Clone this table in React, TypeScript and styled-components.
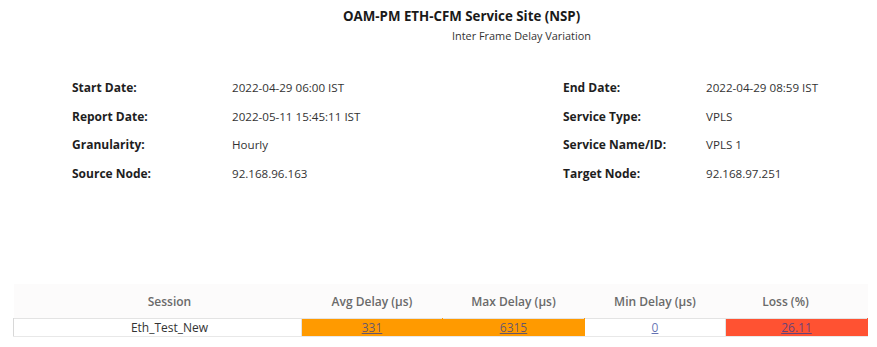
import React from "react";
import styled, { createGlobalStyle } from "styled-components";

const GlobalStyle = createGlobalStyle`
  html, body {
    margin: 0;
    padding: 0;
    background: #ffffff;
  }
  body {
    font-family: "Open Sans", "Noto Sans", "Liberation Sans", sans-serif;
    color: #222;
  }
`;

const Page = styled.div`
  width: 877px;
  height: 347px;
  box-sizing: border-box;
  display: flex;
  flex-direction: column;
  overflow: hidden;
`;

const Header = styled.header`
  display: flex;
  flex-direction: column;
  align-items: flex-start;
  padding: 6px 0 0 343px;
`;

const Title = styled.h1`
  margin: 0;
  font-size: 13.3px;
  font-weight: 700;
  line-height: 20px;
  color: #1a1a1a;
`;

const Subtitle = styled.div`
  margin: 2px 0 0 109px;
  font-size: 10.9px;
  line-height: 16px;
  color: #333;
`;

const InfoGrid = styled.dl`
  margin: 0;
  padding: 29px 0 0 72px;
  display: grid;
  grid-template-columns: 160px 331px 143px auto;
  grid-auto-rows: 28.7px;
  align-items: center;
  font-size: 12px;
`;

const Label = styled.dt`
  font-weight: 700;
  color: #1e1e1e;
`;

const Value = styled.dd`
  margin: 0;
  font-size: 11.6px;
  color: #333;
`;

const Table = styled.table`
  margin: 96px 0 0 13px;
  width: 854px;
  border-collapse: collapse;
  table-layout: fixed;
  font-size: 12px;
`;

const HeadRow = styled.tr`
  background: #fcfbfb;
  height: 35px;
`;

const HeadCell = styled.th<{ $shift?: number }>`
  font-weight: 600;
  color: #6a6a6a;
  text-align: center;
  padding: 0 ${(p) => p.$shift ?? 0}px 0 0;
`;

const BodyRow = styled.tr`
  height: 18px;
`;

const Cell = styled.td<{ $bg?: string }>`
  background: ${(p) => p.$bg ?? "#ffffff"};
  border: 1px solid ${(p) => (p.$bg ? p.$bg : "#e3e3e3")};
  border-top-color: #e3e3e3;
  border-bottom-color: #e8e8e8;
  text-align: center;
  padding: 0;
  color: #333;
  line-height: 16px;
`;

const SessionCell = styled(Cell)`
  padding-left: 24px;
  border-left-color: #d8d8d8;
`;

const Link = styled.a`
  color: rgba(40, 60, 150, 0.72);
  text-decoration: underline;
  cursor: pointer;
`;

const info: [string, string, string, string][] = [
  ["Start Date:", "2022-04-29 06:00 IST", "End Date:", "2022-04-29 08:59 IST"],
  ["Report Date:", "2022-05-11 15:45:11 IST", "Service Type:", "VPLS"],
  ["Granularity:", "Hourly", "Service Name/ID:", "VPLS 1"],
  ["Source Node:", "92.168.96.163", "Target Node:", "92.168.97.251"],
];

const ORANGE = "#ff9a00";
const RED = "#ff5232";

export default function App() {
  return (
    <>
      <GlobalStyle />
      <Page>
        <Header>
          <Title>OAM-PM ETH-CFM Service Site (NSP)</Title>
          <Subtitle>Inter Frame Delay Variation</Subtitle>
        </Header>
        <InfoGrid>
          {info.map(([l1, v1, l2, v2]) => (
            <React.Fragment key={l1}>
              <Label>{l1}</Label>
              <Value>{v1}</Value>
              <Label>{l2}</Label>
              <Value>{v2}</Value>
            </React.Fragment>
          ))}
        </InfoGrid>
        <Table>
          <colgroup>
            <col style={{ width: 288 }} />
            <col style={{ width: 141 }} />
            <col style={{ width: 142 }} />
            <col style={{ width: 141 }} />
            <col style={{ width: 142 }} />
          </colgroup>
          <thead>
            <HeadRow>
              <HeadCell style={{ paddingLeft: 24 }}>Session</HeadCell>
              <HeadCell>Avg Delay (µs)</HeadCell>
              <HeadCell>Max Delay (µs)</HeadCell>
              <HeadCell>Min Delay (µs)</HeadCell>
              <HeadCell $shift={22}>Loss (%)</HeadCell>
            </HeadRow>
          </thead>
          <tbody>
            <BodyRow>
              <SessionCell>Eth_Test_New</SessionCell>
              <Cell $bg={ORANGE}>
                <Link>331</Link>
              </Cell>
              <Cell $bg={ORANGE}>
                <Link>6315</Link>
              </Cell>
              <Cell>
                <Link>0</Link>
              </Cell>
              <Cell $bg={RED}>
                <Link>26.11</Link>
              </Cell>
            </BodyRow>
          </tbody>
        </Table>
      </Page>
    </>
  );
}
